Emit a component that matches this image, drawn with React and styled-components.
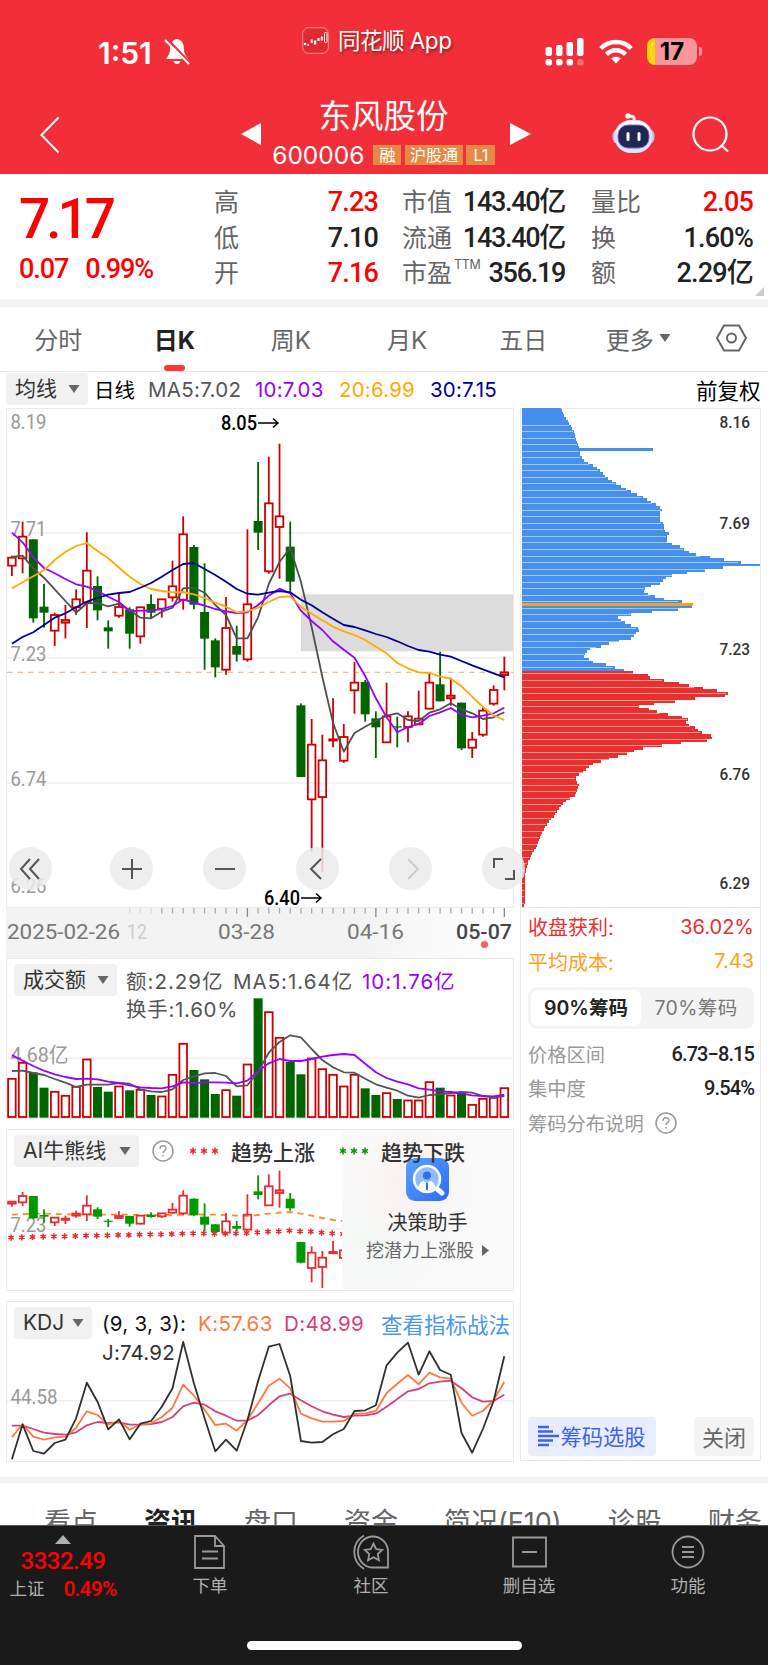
import React from 'react';
import styled, { createGlobalStyle } from 'styled-components';

const GlobalStyle = createGlobalStyle`
  * {
    box-sizing: border-box;
  }

  body {
    margin: 0;
    background: #fff;
    font-family: Inter, "Noto Sans CJK SC", sans-serif;
    color: #333;
  }

  svg {
    display: block;
  }
`;

const RED = '#cc0000';
const GREEN = '#006400';
const DIN = 'Roboto, "Noto Sans CJK SC", sans-serif';

/* ---------- chart data (third-of-a-pixel units from each panel's top) ---------- */

// [rising, high, bodyTop, bodyBottom, low]
const candles = [
  [1, 467, 473, 497, 528], [1, 365, 410, 475, 520], [0, 418, 418, 655, 668], [0, 552, 620, 638, 683],
  [1, 638, 645, 692, 738], [1, 615, 660, 668, 715], [1, 568, 598, 622, 645], [1, 397, 512, 607, 684],
  [0, 529, 558, 631, 661], [0, 661, 682, 694, 746], [1, 577, 621, 647, 653], [0, 622, 628, 701, 746],
  [1, 620, 622, 709, 731], [0, 583, 612, 638, 655], [1, 598, 598, 626, 653], [1, 482, 559, 592, 605],
  [1, 349, 403, 600, 629], [0, 435, 441, 614, 628], [0, 490, 636, 716, 809], [0, 715, 721, 802, 832],
  [1, 591, 684, 809, 824], [0, 677, 738, 764, 785], [1, 388, 613, 778, 785], [0, 186, 363, 398, 450],
  [1, 170, 310, 514, 521], [1, 131, 349, 381, 536], [0, 365, 440, 545, 577], [0, 910, 916, 1131, 1131],
  [1, 957, 1034, 1198, 1355], [1, 1004, 1081, 1191, 1416], [1, 895, 1018, 1021, 1042], [1, 972, 1011, 1082, 1089],
  [1, 786, 848, 871, 941], [0, 840, 846, 943, 965], [0, 934, 955, 982, 1074], [1, 848, 949, 1027, 1027],
  [0, 950, 979, 982, 1042], [1, 934, 949, 981, 1027], [1, 872, 956, 973, 973], [1, 820, 848, 926, 926],
  [0, 755, 853, 904, 904], [1, 833, 887, 895, 917], [0, 908, 908, 1045, 1050], [1, 996, 1019, 1043, 1074],
  [1, 921, 932, 1004, 1010], [1, 856, 870, 911, 917], [1, 770, 817, 825, 871],
];

const ma5 = [471, 467, 505, 533, 568, 603, 638, 610, 609, 619, 611, 630, 653, 655, 635, 623, 565, 563, 578, 615, 645, 715, 715, 652, 552, 486, 443, 545, 680, 830, 968, 1055, 999, 980, 962, 947, 940, 960, 963, 938, 928, 910, 928, 940, 957, 952, 937];
const ma10 = [398, 427, 472, 504, 520, 537, 553, 560, 573, 590, 606, 634, 632, 632, 627, 618, 598, 608, 617, 627, 634, 639, 637, 615, 587, 566, 580, 632, 663, 690, 724, 749, 773, 828, 895, 952, 997, 981, 972, 948, 937, 924, 944, 952, 947, 940, 923];
const ma20 = [565, 547, 529, 511, 480, 456, 438, 429, 453, 475, 503, 530, 552, 567, 573, 577, 576, 583, 594, 608, 620, 637, 634, 623, 606, 591, 589, 620, 641, 661, 680, 694, 705, 720, 740, 760, 789, 805, 817, 819, 830, 836, 859, 890, 921, 946, 960];
const ma30 = [731, 711, 697, 675, 653, 640, 622, 605, 594, 584, 579, 576, 563, 549, 530, 510, 492, 489, 507, 525, 545, 567, 581, 584, 578, 573, 577, 599, 616, 637, 656, 675, 681, 691, 702, 711, 724, 738, 750, 755, 764, 770, 783, 796, 808, 820, 832];

const volumes = [385, 337, 367, 413, 424, 436, 409, 327, 411, 425, 408, 421, 418, 435, 438, 373, 280, 360, 388, 432, 419, 437, 342, 145, 185, 262, 336, 373, 324, 356, 373, 408, 373, 415, 435, 428, 447, 450, 450, 395, 413, 435, 427, 463, 445, 442, 413];
const vol5 = [363, 362, 369, 375, 387, 398, 411, 404, 404, 404, 399, 401, 418, 424, 426, 418, 390, 379, 370, 369, 378, 409, 406, 365, 308, 276, 256, 262, 297, 330, 352, 367, 368, 386, 403, 413, 422, 437, 443, 435, 433, 429, 426, 428, 438, 442, 438];
const vol10 = [315, 332, 348, 362, 373, 381, 387, 386, 388, 395, 399, 406, 412, 414, 415, 409, 397, 399, 397, 397, 398, 400, 392, 363, 340, 327, 333, 333, 327, 320, 315, 312, 315, 341, 367, 384, 395, 403, 415, 419, 424, 426, 431, 436, 438, 439, 434];

const aiCandles = [
  [1, 243, 245, 251, 260], [1, 216, 228, 247, 258], [0, 228, 228, 295, 297], [0, 268, 285, 290, 308],
  [1, 292, 293, 307, 318], [1, 287, 296, 299, 312], [1, 272, 281, 287, 293], [1, 226, 257, 283, 303],
  [0, 262, 268, 290, 297], [0, 297, 302, 305, 321], [1, 274, 288, 294, 295], [0, 287, 288, 311, 320],
  [1, 285, 287, 311, 313], [0, 277, 284, 291, 293], [1, 280, 280, 289, 294], [1, 249, 269, 278, 281],
  [1, 211, 227, 280, 286], [0, 235, 236, 286, 288], [0, 250, 290, 314, 334], [0, 312, 313, 336, 338],
  [1, 279, 304, 338, 342], [0, 303, 318, 326, 334], [1, 223, 284, 329, 331], [0, 166, 214, 225, 238],
  [1, 163, 199, 256, 258], [1, 152, 211, 219, 263], [0, 219, 236, 265, 272], [0, 366, 366, 428, 430],
  [1, 379, 398, 444, 487], [1, 393, 413, 441, 504], [1, 362, 396, 399, 403], [1, 390, 391, 414, 414],
];
const aiLine = [284, 282, 281, 281, 282, 283, 283, 284, 284, 284, 284, 284, 285, 286, 285, 285, 284, 283, 284, 284, 285, 287, 288, 285, 281, 278, 276, 281, 287, 294, 300, 304];
const aiStars = [353, 352, 351, 350, 349, 349, 348, 347, 347, 346, 345, 345, 344, 343, 343, 342, 341, 340, 340, 341, 341, 340, 339, 337, 335, 334, 332, 334, 335, 338, 340, 342];

const kdjJ = [493, 388, 468, 476, 444, 434, 370, 263, 320, 403, 373, 433, 386, 378, 335, 280, 141, 265, 370, 469, 434, 467, 376, 258, 155, 147, 243, 438, 443, 441, 418, 402, 348, 346, 331, 211, 173, 143, 239, 169, 225, 239, 414, 473, 402, 318, 184];
const kdjK = [427, 388, 425, 434, 427, 425, 398, 349, 360, 389, 378, 404, 388, 385, 366, 338, 269, 302, 344, 390, 386, 407, 375, 325, 272, 251, 280, 356, 370, 380, 380, 378, 357, 355, 348, 294, 266, 240, 268, 233, 247, 251, 323, 362, 348, 315, 261];
const kdjD = [392, 392, 402, 413, 417, 419, 412, 391, 381, 384, 382, 389, 389, 387, 381, 366, 334, 323, 329, 349, 362, 377, 377, 360, 331, 304, 296, 316, 334, 349, 359, 366, 362, 361, 356, 335, 312, 289, 282, 265, 260, 257, 280, 307, 320, 318, 299];

// [y, right edge] outline of the chip distribution
const chips = [
  [23, 152], [35, 157], [47, 163], [60, 172], [75, 180], [92, 192], [107, 196], [125, 200], [137, 207], [145, 210],
  [165, 210], [172, 215], [180, 220], [188, 235], [196, 248], [204, 260], [212, 270], [220, 279], [228, 287],
  [236, 296], [243, 306], [251, 318], [259, 333], [267, 347], [275, 364], [283, 381], [290, 398], [298, 411],
  [306, 424], [314, 437], [322, 450], [329, 458], [337, 450], [345, 449], [353, 452], [361, 449], [369, 458],
  [377, 461], [385, 463], [393, 465], [400, 477], [408, 471], [424, 471], [432, 485], [440, 511], [448, 523],
  [456, 538], [463, 556], [471, 599], [479, 642], [487, 692], [495, 751], [502, 647], [510, 590], [518, 535],
  [526, 488], [534, 470], [542, 461], [550, 450], [558, 424], [565, 406], [573, 402], [581, 413], [590, 438],
  [597, 462], [605, 515], [613, 551], [621, 547], [629, 502], [636, 432], [643, 371], [652, 323], [660, 334],
  [668, 347], [676, 363], [684, 386], [692, 386], [699, 380], [707, 372], [715, 365], [722, 331], [730, 301],
  [738, 276], [747, 238], [755, 230], [762, 225], [770, 222], [778, 238], [786, 251], [794, 290], [801, 315],
  [809, 340], [817, 369], [825, 415], [833, 421], [840, 459], [849, 508], [856, 536], [864, 578], [872, 620],
  [880, 654], [888, 645], [895, 563], [904, 492], [911, 435], [919, 386], [927, 418], [935, 442], [943, 474],
  [951, 517], [958, 536], [966, 527], [973, 536], [982, 554], [990, 563], [997, 572], [1006, 604], [1014, 606],
  [1022, 592], [1029, 517], [1037, 458], [1045, 401], [1052, 374], [1061, 351], [1069, 324], [1076, 298],
  [1084, 276], [1092, 251], [1100, 239], [1108, 230], [1116, 220], [1124, 208], [1132, 198], [1145, 200],
  [1155, 207], [1163, 204], [1178, 199], [1187, 194], [1194, 182], [1202, 170], [1210, 160], [1218, 154],
  [1234, 142], [1250, 131], [1270, 112], [1290, 101], [1310, 92], [1340, 80], [1360, 66], [1380, 57],
  [1400, 50], [1420, 46], [1450, 46], [1500, 45], [1525, 43],
];

const chipAt = (y) => {
  const n = chips.findIndex((p) => p[0] >= y);
  if (n <= 0) return chips[0][1];
  const [y0, x0] = chips[n - 1];
  const [y1, x1] = chips[n];
  return x0 + ((x1 - x0) * (y - y0)) / (y1 - y0);
};

const xAt = (i) => 11.9 + i * 10.705;
const pointsOf = (values, top) => values.map((v, i) => `${xAt(i).toFixed(1)},${(top + v / 3).toFixed(1)}`).join(' ');

/* ---------- chart pieces ---------- */

const Line = ({ values, top, color, ...rest }) => (
  <polyline points={pointsOf(values, top)} fill="none" stroke={color} strokeWidth="1.8" strokeLinejoin="round" {...rest} />
);

const Candles = ({ data, top, up = RED, down = GREEN }) => (
  <g>
    {data.map(([rise, high, open, close, low], i) => {
      const x = xAt(i);
      const y0 = top + open / 3;
      const h = Math.max((close - open) / 3, 1.2);
      return rise ? (
        <g key={i} stroke={up} strokeWidth="1.8" fill="none">
          <line x1={x} x2={x} y1={top + high / 3} y2={y0} />
          <line x1={x} x2={x} y1={y0 + h} y2={top + low / 3} />
          <rect x={x - 3.8} y={y0} width="7.6" height={h} fill={h < 3 ? up : 'none'} fillOpacity="0.5" />
        </g>
      ) : (
        <g key={i} fill={down}>
          <rect x={x - 0.9} y={top + high / 3} width="1.8" height={(low - high) / 3} />
          <rect x={x - 4.5} y={y0} width="9" height={h} />
        </g>
      );
    })}
  </g>
);

const Star = ({ x, y, color, r = 3.1 }) => (
  <path
    d={`M${x} ${y - r}V${y + r}M${x - r * 0.87} ${y - r / 2}L${x + r * 0.87} ${y + r / 2}M${x + r * 0.87} ${y - r / 2}L${x - r * 0.87} ${y + r / 2}`}
    stroke={color}
    strokeWidth="1.5"
  />
);

const AxisLabel = ({ x = 10.5, y, w = 36, children, ...rest }) => (
  <text x={x} y={y} fontFamily={DIN} fontSize="21" fill="#999" textLength={w} lengthAdjust="spacingAndGlyphs" {...rest}>
    {children}
  </text>
);

const StarsIcon = styled.svg`
  flex: none;
  margin: 0 10px 0 ${(p) => p.$left}px;
`;

const Stars = ({ color, left }) => (
  <StarsIcon $left={left} width="32" height="12" viewBox="0 0 32 12">
    {[4, 15, 26].map((x) => (
      <Star key={x} x={x} y={6} color={color} r={3.4} />
    ))}
  </StarsIcon>
);

const Caret = () => (
  <svg width="12" height="10" viewBox="0 0 12 10">
    <path d="M0.5 1h11L6 9z" fill="#666" />
  </svg>
);

const Help = () => (
  <svg width="22" height="22" viewBox="0 0 22 22" fill="none" stroke="#999" strokeWidth="1.5">
    <circle cx="11" cy="11" r="10" />
    <path d="M8 8.800c0-4 6-3.900 6-.3 0 2-3 2.200-3 4.600M11 15v1.600" />
  </svg>
);

const Page = styled.div`
  width: 768px;
  height: 1665px;
  overflow: hidden;
  display: flex;
  flex-direction: column;
  background: #fff;
`;

/* ---------- header ---------- */

const Header = styled.header`
  height: 174px;
  flex: none;
  background: #f22f38;
  color: #fff;
`;

const StatusBar = styled.div`
  height: 100px;
  padding: 0 67px 0 98px;
  display: grid;
  grid-template-columns: 204px 243px 1fr;
`;

const StatusGroup = styled.div`
  display: flex;
  align-items: center;
  height: ${(p) => p.$h}px;
  gap: ${(p) => p.$gap}px;
  white-space: nowrap;
`;

const Clock = styled.span`
  font-size: 30px;
  font-weight: 600;
  width: 58px;
  padding-top: 1px;
`;

const AppName = styled.span`
  font-size: 22.500px;
  letter-spacing: -0.500px;
  margin-top: -3px;
  text-shadow: 1px 2px 3px rgba(0, 0, 0, 0.45);
`;

const Battery = styled.div`
  width: 50px;
  height: 27px;
  border-radius: 8px;
  background: linear-gradient(90deg, #ffd60a 8px, #f9969b 8px);
  color: #000;
  font-size: 24px;
  font-weight: 700;
  line-height: 27px;
  text-align: center;
`;

const BatteryTip = styled.i`
  width: 3px;
  height: 9px;
  margin-left: -12px;
  border-radius: 0 3px 3px 0;
  background: #f9969b;
`;

const NavBar = styled.div`
  height: 74px;
  display: grid;
  grid-template-columns: 241px 20px 249px 21px 81px 43px 37px 36px;
`;

const NavIcon = styled.div`
  padding-left: ${(p) => p.$left || 0}px;
  padding-top: ${(p) => p.$top}px;
`;

const Title = styled.div`
  text-align: center;
  padding-right: 4px;
  font-family: "Noto Sans CJK SC", sans-serif;
  font-size: 32.500px;
  line-height: 28px;
  height: 44px;
`;

const CodeRow = styled.div`
  display: flex;
  align-items: center;
  justify-content: center;
  height: 22px;
`;

const Code = styled.span`
  font-size: 24.500px;
  margin-right: 9px;
  line-height: 22px;
`;

const Badge = styled.span`
  height: 20px;
  padding: 0 ${(p) => p.$pad || 5}px;
  margin-right: 3.500px;
  background: #e58a45;
  font-size: 16px;
  line-height: 20px;
  white-space: nowrap;
`;

/* ---------- quote ---------- */

const Quote = styled.section`
  position: relative;
  height: 125px;
  flex: none;
  padding: 11px 15px 0 19px;
  display: grid;
  grid-template-columns: 195px 164px 24px 163px 26px 162px;
`;

const Price = styled.div`
  font-family: ${DIN};
  font-weight: 500;
  font-size: 55px;
  line-height: 69px;
  letter-spacing: -4px;
  color: #f00;
`;

const Change = styled.div`
  display: flex;
  gap: 17px;
  font-family: ${DIN};
  font-weight: 500;
  font-size: 27px;
  line-height: 31px;
  letter-spacing: -1.100px;
  color: #f00;
`;

const StatColumn = styled.div`
  grid-column: ${(p) => p.$col};
`;

const StatRow = styled.div`
  display: flex;
  justify-content: space-between;
  height: 35.500px;
  line-height: 35.500px;
  font-size: 25px;
  color: #666;
  white-space: nowrap;

  b {
    font-family: ${DIN};
    font-weight: 500;
    font-size: 27px;
    letter-spacing: ${(p) => (p.$long ? -1.3 : -0.8)}px;
    color: ${(p) => (p.$up ? '#f00' : '#222')};
  }

  sup {
    font-size: 12.500px;
    line-height: 0;
    vertical-align: 13px;
    margin-left: 2px;
    letter-spacing: -0.300px;
  }
`;

const Corner = styled.i`
  position: absolute;
  right: 4px;
  bottom: 3px;
  border-left: 9px solid transparent;
  border-bottom: 9px solid #ccc;
`;

const Stat = ({ label, sup, value, up }) => (
  <StatRow $up={up} $long={value.length > 5}>
    <span>
      {label}
      {sup && <sup>{sup}</sup>}
    </span>
    <b>{value}</b>
  </StatRow>
);

const Band = styled.div`
  height: ${(p) => p.$h}px;
  flex: none;
  background: #f4f4f4;
`;

/* ---------- period tabs ---------- */

const Tabs = styled.nav`
  height: 65px;
  flex: none;
  display: grid;
  grid-template-columns: repeat(5, 116.300px) 113.500px 1fr;
  border-bottom: 1px solid #eaeaea;
`;

const Tab = styled.div`
  display: flex;
  align-items: center;
  justify-content: center;
  gap: 5px;
  position: relative;
  padding-bottom: 2px;
  font-size: 24px;
  font-weight: ${(p) => (p.$active ? 700 : 400)};
  color: ${(p) => (p.$active ? '#222' : '#666')};

  &::after {
    content: "";
    display: ${(p) => (p.$active ? 'block' : 'none')};
    position: absolute;
    bottom: 0;
    width: 21px;
    height: 6px;
    border-radius: 3px;
    background: #ff3730;
  }
`;

const Pill = styled.div`
  height: 32px;
  width: ${(p) => p.$w}px;
  margin-right: ${(p) => p.$gap}px;
  flex: none;
  display: flex;
  align-items: center;
  justify-content: space-between;
  padding: 0 8px 0 9px;
  border-radius: 4px;
  background: #f1f1f1;
  font-size: 21px;
  line-height: 30px;
  color: #333;
  white-space: nowrap;
`;

const MaRow = styled.div`
  height: 36px;
  flex: none;
  display: flex;
  align-items: center;
  padding: 0 8px 2px 6px;
  color: #111;
`;

const Legend = styled.span`
  width: ${(p) => (p.$w ? `${p.$w}px` : 'auto')};
  flex: none;
  font-size: ${(p) => p.$size || 20}px;
  font-weight: ${(p) => p.$weight || 400};
  color: ${(p) => p.$color || '#555'};
  letter-spacing: ${(p) => p.$ls || 0}px;
  white-space: nowrap;
`;

/* ---------- charts ---------- */

const Charts = styled.main`
  height: 1069px;
  flex: none;
  display: grid;
  grid-template-columns: 508px 241px;
  column-gap: 6px;
  padding-left: 6px;
`;

const Panel = styled.section`
  position: relative;
  height: ${(p) => p.$h}px;
  margin-bottom: ${(p) => p.$mb || 0}px;
  border: 1.500px solid #eaeaea;
`;

const Plot = styled.svg`
  position: absolute;
  left: -1px;
  top: -1px;
  overflow: visible;
`;

const PanelHead = styled.div`
  position: relative;
  display: flex;
  align-items: center;
  height: 32px;
  margin: 5px 0 0 7px;
`;

const SecondLine = styled.div`
  position: relative;
  height: 26px;
  line-height: 28px;
  padding-left: ${(p) => p.$left}px;
`;

const ChartTools = styled.div`
  position: absolute;
  z-index: 2;
  left: 2px;
  bottom: 17px;
  display: flex;
  gap: 50px;
`;

const RoundButton = styled.button`
  width: 43px;
  height: 43px;
  padding: 0;
  border: 0;
  border-radius: 50%;
  display: grid;
  place-items: center;
  background: rgba(235, 235, 235, 0.85);

  &:first-child {
    margin-right: 8px;
  }

  path {
    fill: none;
    stroke: ${(p) => (p.$off ? '#ccc' : '#555')};
    stroke-width: 2;
  }
`;

const tools = [
  'M13 4L4 14l9 10M22 4l-9 10 9 10',
  'M14 4v20M4 14h20',
  'M4 14h20',
  'M17 4L7 14l10 10',
  'M11 4l10 10-10 10',
  'M4 13V4h9M24 15v9h-9',
];

const DateStrip = styled.div`
  height: 50px;
  background: linear-gradient(90deg, #f3f3f3 70%, #fafafa 85%, #fff);
`;

const Helper = styled.div`
  position: absolute;
  right: 0;
  top: 0;
  width: 171px;
  height: 159px;
  padding-top: 28px;
  display: flex;
  flex-direction: column;
  align-items: center;
  background: radial-gradient(ellipse at 40% 30%, #faf0f0, transparent 45%),
    radial-gradient(ellipse at 15% 70%, #f3f8f5, transparent 40%), #fafafa;
  font-size: 20px;
  color: #333;

  strong {
    margin-top: 6px;
    font-weight: 400;
    line-height: 30px;
  }

  small {
    display: flex;
    align-items: center;
    gap: 8px;
    font-size: 18px;
    line-height: 25px;
    color: #666;
    white-space: nowrap;
  }
`;

const ChipPanel = styled.aside`
  width: 241px;
  height: 1053px;
  border: 1.500px solid #eaeaea;
  border-top-width: 1px;
  display: flex;
  flex-direction: column;
`;

const ChipPlot = styled.svg`
  flex: none;
  margin-top: -1px;
`;

const ChipRow = styled.div`
  display: flex;
  align-items: center;
  justify-content: ${(p) => (p.$start ? 'flex-start' : 'space-between')};
  gap: 11px;
  height: ${(p) => p.$h || 34}px;
  padding: 0 6px 0 7px;
  font-size: ${(p) => p.$size || 20}px;
  color: ${(p) => p.$color || '#999'};

  b {
    font-family: ${DIN};
    font-weight: 500;
    font-size: 20px;
    letter-spacing: -0.900px;
    color: #222;
  }
`;

const Segment = styled.div`
  height: 42px;
  margin: 10px 6px 8px 7px;
  padding: 3px;
  display: grid;
  grid-template-columns: 1fr 1fr;
  border-radius: 9px;
  background: #f4f4f4;
`;

const SegmentItem = styled.div`
  border-radius: 7px;
  background: ${(p) => (p.$active ? '#fff' : 'none')};
  color: ${(p) => (p.$active ? '#222' : '#777')};
  font-weight: ${(p) => (p.$active ? 600 : 400)};
  letter-spacing: ${(p) => (p.$active ? 0 : 0.4)}px;
  font-size: 19.500px;
  line-height: 36px;
  text-align: center;
  white-space: nowrap;
`;

const ChipActions = styled.div`
  margin-top: auto;
  padding: 0 6px 4px 7px;
  display: flex;
  justify-content: space-between;
`;

const ActionButton = styled.button`
  height: 39px;
  width: ${(p) => p.$w}px;
  border: 0;
  padding: 0 0 2px;
  display: flex;
  align-items: center;
  justify-content: center;
  gap: 1px;
  border-radius: 4px;
  font-family: inherit;
  font-size: ${(p) => p.$size}px;
  background: ${(p) => (p.$primary ? '#e8eeff' : '#f4f4f4')};
  color: ${(p) => (p.$primary ? '#3d63f5' : '#666')};
`;

/* ---------- bottom ---------- */

const NewsTabs = styled.nav`
  height: 42px;
  flex: none;
  overflow: hidden;
  display: flex;
  gap: 46px;
  padding: 20px 0 0 44px;
  font-size: 27px;
  line-height: 40px;
  white-space: nowrap;
  color: #666;

  b {
    color: #222;
  }
`;

const BottomBar = styled.footer`
  flex: 1;
  background: #1a1a1a;
  border-top: 1px solid #555;
  color: #b0b0b0;
  display: flex;
  flex-direction: column;
  align-items: center;
`;

const BottomItems = styled.div`
  width: 100%;
  height: 115px;
  display: grid;
  grid-template-columns: 124px 172px 150px 166px 152px;
`;

const BottomItem = styled.div`
  display: flex;
  flex-direction: column;
  align-items: center;
  padding-top: 8px;
  font-size: 17.500px;
  line-height: 31px;

  svg {
    fill: none;
    stroke: #999;
    stroke-width: 1.800;
  }
`;

const IndexBox = styled.div`
  padding: 9px 0 0 2px;
  display: flex;
  flex-direction: column;
  align-items: center;
  font-family: ${DIN};
  color: #f00;
  font-size: 24px;
  font-weight: 500;
  line-height: 35px;
  letter-spacing: -0.500px;

  div {
    display: flex;
    gap: 19px;
    font-size: 21px;
    line-height: 21px;
    letter-spacing: -0.800px;
  }

  span {
    color: #b0b0b0;
    font-size: 17.500px;
    font-weight: 400;
    letter-spacing: 0;
  }
`;

const HomeIndicator = styled.div`
  width: 275px;
  height: 9px;
  border-radius: 5px;
  background: #fff;
`;

/* ---------- sections ---------- */

const TopHeader = () => (
  <Header>
    <StatusBar>
      <StatusGroup $h={104} $gap={8}>
        <Clock>1:51</Clock>
        <svg width="27" height="28" viewBox="0 0 27 28">
          <path d="M13 1c-5 1-7 5-7 10 0 5-2 7-4 10h22c-2-3-4-5-4-10 0-5-2-9-7-10zM9.500 23c1 4 6 4 7 0z" fill="#fff" />
          <path d="M3 2l23 24" stroke="#f22f38" strokeWidth="4" />
          <path d="M1 2l24 24" stroke="#fff" strokeWidth="2" />
        </svg>
      </StatusGroup>
      <StatusGroup $h={81} $gap={9}>
        <svg width="27" height="27" viewBox="0 0 27 27">
          <rect x="0.700" y="0.700" width="25.600" height="25.600" rx="6" fill="#df2a30" stroke="#f88d91" />
          <g fill="#fff">
            <circle cx="3" cy="17" r="1.300" />
            <circle cx="6.300" cy="18" r="1" />
            <path d="M8.700 12.500h2v3.500h-2zM12 13.500h2.200v4H12zM15.500 11h2v3h-2zM18.800 9.500h2v4h-2z" />
          </g>
          <rect x="22.500" y="5.500" width="2.500" height="10" rx="1" fill="none" stroke="#fff" />
        </svg>
        <AppName>同花顺 App</AppName>
      </StatusGroup>
      <StatusGroup $h={103} $gap={14}>
        <svg width="40" height="28" viewBox="0 0 40 28" fill="#fff">
          <rect x="0.500" y="9" width="6.500" height="9" rx="2" />
          <rect x="11" y="7" width="6.500" height="11" rx="2" />
          <rect x="21.500" y="4" width="6.500" height="14" rx="2" />
          <rect x="32" y="0" width="6.500" height="18" rx="2" />
          <rect x="0.500" y="21" width="6.500" height="6.500" rx="2.500" />
          <rect x="11" y="21" width="6.500" height="6.500" rx="2.500" />
          <rect x="21.500" y="21" width="6.500" height="6.500" rx="2.500" />
          <rect x="32" y="21" width="6.500" height="6.500" rx="2.500" opacity="0.3" />
        </svg>
        <svg width="34" height="25" viewBox="0 0 34 25" fill="none" stroke="#fff" strokeWidth="4.500">
          <path d="M1.800 9.500C10 .8 24 .8 32.200 9.500" />
          <path d="M7.500 15.300c5.500-5.500 13.500-5.500 19 0" />
          <path d="M17 24.500l-4.800-5c2.500-2.500 7-2.500 9.600 0z" fill="#fff" stroke="none" />
        </svg>
        <Battery>17</Battery>
        <BatteryTip />
      </StatusGroup>
    </StatusBar>
    <NavBar>
      <NavIcon $left={40} $top={16}>
        <svg width="20" height="38" viewBox="0 0 20 38" fill="none" stroke="#fff" strokeWidth="2">
          <path d="M18.500 1.500L1.500 19l17 17.500" />
        </svg>
      </NavIcon>
      <NavIcon $top={23}>
        <svg width="20" height="22" viewBox="0 0 20 22">
          <path d="M20 0v22L0 11z" fill="#fff" />
        </svg>
      </NavIcon>
      <div>
        <Title>东风股份</Title>
        <CodeRow>
          <Code>600006</Code>
          <Badge $pad={6}>融</Badge>
          <Badge>沪股通</Badge>
          <Badge $pad={7}>L1</Badge>
        </CodeRow>
      </div>
      <NavIcon $top={23}>
        <svg width="21" height="22" viewBox="0 0 21 22">
          <path d="M0 0v22l21-11z" fill="#fff" />
        </svg>
      </NavIcon>
      <i />
      <NavIcon $top={13}>
        <svg width="43" height="41" viewBox="0 0 43 41">
          <path d="M22 8c1-5-2-5-6-5" fill="none" stroke="#e6e8fa" strokeWidth="3" />
          <circle cx="16" cy="3" r="2.700" fill="#fff" />
          <rect x="0.500" y="16" width="42" height="15" rx="6" fill="#b9bfe8" />
          <rect x="2.500" y="7" width="38" height="33" rx="16" fill="#dfe2fa" />
          <rect x="5" y="8" width="33" height="27" rx="13" fill="#fff" />
          <rect x="6" y="12" width="31" height="23" rx="10" fill="#1e2850" stroke="#6f68d8" />
          <rect x="14.500" y="19" width="3" height="9" rx="1.500" fill="#fff" />
          <rect x="25.500" y="19" width="3" height="9" rx="1.500" fill="#fff" />
        </svg>
      </NavIcon>
      <i />
      <NavIcon $top={16}>
        <svg width="37" height="37" viewBox="0 0 37 37" fill="none" stroke="#fff" strokeWidth="2.200">
          <circle cx="18" cy="18" r="16.500" />
          <path d="M29.500 29.500l6.500 6" />
        </svg>
      </NavIcon>
    </NavBar>
  </Header>
);

const QuotePanel = () => (
  <Quote>
    <div>
      <Price>7.17</Price>
      <Change>
        <span>0.07</span>
        <span>0.99%</span>
      </Change>
    </div>
    <StatColumn $col={2}>
      <Stat label="高" value="7.23" up />
      <Stat label="低" value="7.10" />
      <Stat label="开" value="7.16" up />
    </StatColumn>
    <StatColumn $col={4}>
      <Stat label="市值" value="143.40亿" />
      <Stat label="流通" value="143.40亿" />
      <Stat label="市盈" sup="TTM" value="356.19" />
    </StatColumn>
    <StatColumn $col={6}>
      <Stat label="量比" value="2.05" up />
      <Stat label="换" value="1.60%" />
      <Stat label="额" value="2.29亿" />
    </StatColumn>
    <Corner />
  </Quote>
);

const KLine = () => (
  <Panel $h={500}>
    <Plot width="508" height="500" viewBox="6 408 508 500">
      {[533, 658, 783].map((y) => (
        <line key={y} x1="7" x2="513" y1={y} y2={y} stroke="#efefef" strokeWidth="1.500" />
      ))}
      <AxisLabel y={429}>8.19</AxisLabel>
      <AxisLabel y={535.5}>7.71</AxisLabel>
      <AxisLabel y={661}>7.23</AxisLabel>
      <AxisLabel y={786}>6.74</AxisLabel>
      <AxisLabel y={893}>6.26</AxisLabel>
      <rect x="301" y="594.300" width="212" height="57" fill="#dcdcdc" />
      <line x1="7" x2="513" y1="672.300" y2="672.300" stroke="#dfb57a" strokeDasharray="5.500 5" />
      <Candles data={candles} top={400} />
      <Line values={ma5} top={400} color="#505050" />
      <Line values={ma10} top={400} color="#9900ff" />
      <Line values={ma20} top={400} color="#ffaa00" />
      <Line values={ma30} top={400} color="#000099" />
      <AxisLabel x={221} y={430} fill="#000" fontWeight="500">8.05</AxisLabel>
      <path d="M258 423h20M273 418.500l5 4.500-5 4.500" fill="none" stroke="#000" strokeWidth="1.500" />
      <AxisLabel x={264} y={905} fill="#000" fontWeight="500">6.40</AxisLabel>
      <path d="M301 898h20M316 893.500l5 4.500-5 4.500" fill="none" stroke="#000" strokeWidth="1.500" />
    </Plot>
    <ChartTools>
      {tools.map((d, i) => (
        <RoundButton key={d} $off={i === 4}>
          <svg width="28" height="28" viewBox="0 0 28 28">
            <path d={d} />
          </svg>
        </RoundButton>
      ))}
    </ChartTools>
  </Panel>
);

const Dates = () => (
  <DateStrip>
    <svg width="508" height="50" viewBox="6 908 508 50">
      {candles.slice(11).map((c, n) => {
        const i = n + 11;
        const major = i === 22 || i === 34 || i === 46;
        return (
          <line
            key={i}
            x1={xAt(i)}
            x2={xAt(i)}
            y1="908"
            y2={major ? 917 : 913.5}
            stroke={major ? '#888' : '#aaa'}
            strokeWidth="1.300"
            opacity={i < 14 ? 0.3 : 1}
          />
        );
      })}
      <AxisLabel x={7} y={939} w={113} fill="#777" fontSize="20">2025-02-26</AxisLabel>
      <AxisLabel x={127} y={939} w={20} fill="#ccc" fontSize="20">12</AxisLabel>
      <AxisLabel x={218} y={939} w={57} fill="#777" fontSize="20">03-28</AxisLabel>
      <AxisLabel x={347} y={939} w={57} fill="#777" fontSize="20">04-16</AxisLabel>
      <AxisLabel x={456} y={939} w={56} fill="#444" fontSize="20" fontWeight="500">05-07</AxisLabel>
      <circle cx="484.500" cy="944.500" r="3.600" fill="#f95e60" />
    </svg>
  </DateStrip>
);

const Volume = () => (
  <Panel $h={161} $mb={10}>
    <Plot width="508" height="161" viewBox="6 958 508 161">
      <line x1="7" x2="513" y1="1058.300" y2="1058.300" stroke="#efefef" strokeWidth="1.500" />
      <AxisLabel y={1062} w={58}>4.68亿</AxisLabel>
      {volumes.map((v, i) => {
        const y = 950 + v / 3;
        return candles[i][0] ? (
          <rect key={i} x={xAt(i) - 3.8} y={y + 0.5} width="7.600" height={1116.5 - y} fill="#fff" stroke={RED} strokeWidth="1.800" />
        ) : (
          <rect key={i} x={xAt(i) - 4.5} y={y} width="9" height={1117.7 - y} fill={GREEN} />
        );
      })}
      <Line values={vol5} top={950} color="#555" />
      <Line values={vol10} top={950} color="#9900ff" />
    </Plot>
    <PanelHead>
      <Pill $w={103} $gap={9}>成交额 <Caret /></Pill>
      <Legend $w={107} $size={20.5} $ls={1}>额:2.29亿</Legend>
      <Legend $w={129} $size={20.5} $ls={1}>MA5:1.64亿</Legend>
      <Legend $size={20.5} $ls={1} $color="#9900ff">10:1.76亿</Legend>
    </PanelHead>
    <SecondLine $left={119}>
      <Legend $size={20.5} $ls={0.7}>换手:1.60%</Legend>
    </SecondLine>
  </Panel>
);

const BullBear = () => (
  <Panel $h={162} $mb={10}>
    <Plot width="508" height="162" viewBox="6 1129 508 162">
      <line x1="7" x2="513" y1="1229.300" y2="1229.300" stroke="#efefef" strokeWidth="1.500" />
      <AxisLabel y={1232}>7.23</AxisLabel>
      <Line values={aiLine} top={1120} color="#ff8a2a" strokeDasharray="6 5" />
      <Candles data={aiCandles} top={1120} up="#e82b30" down="#009900" />
      {aiStars.map((v, i) => (
        <Star key={i} x={xAt(i) - 0.8} y={1120 + v / 3} color="#e82b30" />
      ))}
    </Plot>
    <Helper>
      <svg width="43" height="44" viewBox="0 0 43 44">
        <defs>
          <linearGradient id="helperBg" x1="0" y1="0" x2="1" y2="1">
            <stop offset="0" stopColor="#5aa2ff" />
            <stop offset="1" stopColor="#2c6bfa" />
          </linearGradient>
        </defs>
        <rect width="43" height="43" rx="9" fill="url(#helperBg)" />
        <path d="M31 31l5 4" stroke="#fff" strokeWidth="5" strokeLinecap="round" />
        <circle cx="21" cy="21" r="13" fill="#8fbcff" stroke="#fff" strokeWidth="2.500" />
        <circle cx="21" cy="17.500" r="4" fill="#2f70e8" />
        <path d="M12.500 29c1-5 4-6 6-6l2.500 3 2.500-3c2 0 5 1 6 6-5 5-12 5-17 0z" fill="#fff" />
        <path d="M21 25v7" stroke="#2f70e8" strokeWidth="2" />
      </svg>
      <strong>决策助手</strong>
      <small>
        挖潜力上涨股
        <svg width="7" height="11" viewBox="0 0 7 11">
          <path d="M0 0l7 5.500L0 11z" fill="#666" />
        </svg>
      </small>
    </Helper>
    <PanelHead>
      <Pill $w={125} $gap={13}>AI牛熊线 <Caret /></Pill>
      <Help />
      <Stars color="#e82b30" left={15} />
      <Legend $w={84} $size={21} $weight={500} $color="#333">趋势上涨</Legend>
      <Stars color="#009900" left={24} />
      <Legend $size={21} $weight={500} $color="#333">趋势下跌</Legend>
    </PanelHead>
  </Panel>
);

const Kdj = () => (
  <Panel $h={161}>
    <Plot width="508" height="161" viewBox="6 1301 508 161">
      <line x1="7" x2="513" y1="1400.700" y2="1400.700" stroke="#efefef" strokeWidth="1.500" />
      <AxisLabel y={1404} w={47}>44.58</AxisLabel>
      <Line values={kdjD} top={1295} color="#d63f7c" />
      <Line values={kdjK} top={1295} color="#ff7840" />
      <Line values={kdjJ} top={1295} color="#303030" />
    </Plot>
    <PanelHead>
      <Pill $w={78} $gap={10}>KDJ <Caret /></Pill>
      <Legend $w={96} $size={20.5} $ls={0.3} $color="#111">(9, 3, 3):</Legend>
      <Legend $w={86} $size={20.5} $ls={0.4} $color="#ff7840">K:57.63</Legend>
      <Legend $w={97} $size={20.5} $ls={0.4} $color="#d63f7c">D:48.99</Legend>
      <Legend $size={21.5} $color="#4a96f0">查看指标战法</Legend>
    </PanelHead>
    <SecondLine $left={95}>
      <Legend $size={20.5} $ls={0.2} $color="#333">J:74.92</Legend>
    </SecondLine>
  </Panel>
);

const chipRows = Array.from({ length: 191 }, (_, n) => n - 60);

const Chips = () => (
  <ChipPanel>
    <ChipPlot width="239" height="500" viewBox="521 408 239 500">
      <g shapeRendering="crispEdges">
        {chipRows.map((k) => {
          const y = 495 + k * 7.86;
          const edge = k === -44 ? 429 : chipAt(y);
          return (
            <rect
              key={k}
              x="521.500"
              y={400 + y / 3 - 1.3}
              width={(edge - 35) / 3}
              height="2.620"
              fill={k === 15 ? '#f5a11d' : k > 40 ? '#ea2f2f' : '#4590ee'}
            />
          );
        })}
        {Array.from({ length: 74 }, (_, n) => {
          const y = 424.5 + n * 6.55;
          const edge = chipAt((y - 400) * 3);
          return <rect key={n} x="521.500" y={y} width={Math.max((edge - 38) / 3, 0)} height="1" fill="#fff" opacity="0.5" />;
        })}
      </g>
      <rect x="521" y="907" width="239" height="1" fill="#eaeaea" />
      {[['8.16', 427.5], ['7.69', 529], ['7.23', 654.5], ['6.76', 779.5], ['6.29', 889]].map(([t, y]) => (
        <AxisLabel key={t} x={719.5} y={y} w={30.5} fontSize="16.500" fontWeight="500" fill="#333">{t}</AxisLabel>
      ))}
    </ChipPlot>
    <ChipRow $h={37} $color="#ea2f2f"><span>收盘获利:</span><span>36.02%</span></ChipRow>
    <ChipRow $h={32} $color="#ff9f1f"><span>平均成本:</span><span>7.43</span></ChipRow>
    <Segment>
      <SegmentItem $active>90%筹码</SegmentItem>
      <SegmentItem>70%筹码</SegmentItem>
    </Segment>
    <ChipRow $size={19.3}><span>价格区间</span><b>6.73−8.15</b></ChipRow>
    <ChipRow $size={19.3}><span>集中度</span><b>9.54%</b></ChipRow>
    <ChipRow $size={19.3} $h={36} $start>筹码分布说明 <Help /></ChipRow>
    <ChipActions>
      <ActionButton $primary $w={128} $size={21.3}>
        <svg width="21" height="22" viewBox="0 0 21 22" stroke="#3d63f5" strokeWidth="2.400">
          <path d="M0 2h11M0 6.500h15M0 11h21M0 15.500h15M0 20h11" />
        </svg>
        筹码选股
      </ActionButton>
      <ActionButton $w={60} $size={22}>关闭</ActionButton>
    </ChipActions>
  </ChipPanel>
);

const Bottom = () => (
  <BottomBar>
    <BottomItems>
      <IndexBox>
        <svg width="16" height="9" viewBox="0 0 16 9">
          <path d="M0 9l8-9 8 9z" fill="#b0b0b0" />
        </svg>
        3332.49
        <div>
          <span>上证</span>0.49%
        </div>
      </IndexBox>
      <BottomItem>
        <svg width="32" height="36" viewBox="0 0 32 36">
          <path d="M1 2h20l9 10v22H1zM21 2v10h9M8 17.500h16M8 24.500h16" />
        </svg>
        下单
      </BottomItem>
      <BottomItem>
        <svg width="36" height="36" viewBox="0 0 36 36">
          <path d="M35 33.500H20.500A15 15.500 0 1 1 35 18zM11 1.500C-2 9-2 27 11 35" />
          <path d="M20.500 9.500l2.700 5.600 6 .8-4.400 4.200 1.100 6.100-5.400-3-5.400 3 1.100-6.100-4.400-4.200 6-.8z" />
        </svg>
        社区
      </BottomItem>
      <BottomItem>
        <svg width="35" height="36" viewBox="0 0 35 36">
          <path d="M1 3.500h33v29H1zM10 18h15" />
        </svg>
        删自选
      </BottomItem>
      <BottomItem>
        <svg width="34" height="36" viewBox="0 0 34 36">
          <circle cx="17" cy="18" r="15.500" />
          <path d="M11 13h12M11 18h12M11 23h12" />
        </svg>
        功能
      </BottomItem>
    </BottomItems>
    <HomeIndicator />
  </BottomBar>
);

const App = () => (
  <Page>
    <GlobalStyle />
    <TopHeader />
    <QuotePanel />
    <Band $h={8} />
    <Tabs>
      <Tab>分时</Tab>
      <Tab $active>日K</Tab>
      <Tab>周K</Tab>
      <Tab>月K</Tab>
      <Tab>五日</Tab>
      <Tab>更多 <Caret /></Tab>
      <Tab>
        <svg width="31" height="28" viewBox="0 0 31 28" fill="none" stroke="#666" strokeWidth="2">
          <path d="M8 1.500h15L30 14l-7 12.500H8L1 14z" />
          <circle cx="15.500" cy="14" r="4.500" />
        </svg>
      </Tab>
    </Tabs>
    <MaRow>
      <Pill $w={82} $gap={6}>均线 <Caret /></Pill>
      <Legend $w={54} $size={20.5} $color="#000">日线</Legend>
      <Legend $w={107} $size={20.5} $ls={0.3}>MA5:7.02</Legend>
      <Legend $w={84} $size={20.5} $ls={0.2} $color="#9900ff">10:7.03</Legend>
      <Legend $w={91} $size={20.5} $ls={0.2} $color="#ffaa00">20:6.99</Legend>
      <Legend $w={266} $size={20.5} $ls={0.2} $color="#000099">30:7.15</Legend>
      <Legend $size={21.5} $color="#000">前复权</Legend>
    </MaRow>
    <Charts>
      <div>
        <KLine />
        <Dates />
        <Volume />
        <BullBear />
        <Kdj />
      </div>
      <Chips />
    </Charts>
    <Band $h={6} />
    <NewsTabs>
      <span>看点</span>
      <b>资讯</b>
      <span>盘口</span>
      <span>资金</span>
      <span>简况(F10)</span>
      <span>诊股</span>
      <span>财务</span>
    </NewsTabs>
    <Bottom />
  </Page>
);

export default App;
